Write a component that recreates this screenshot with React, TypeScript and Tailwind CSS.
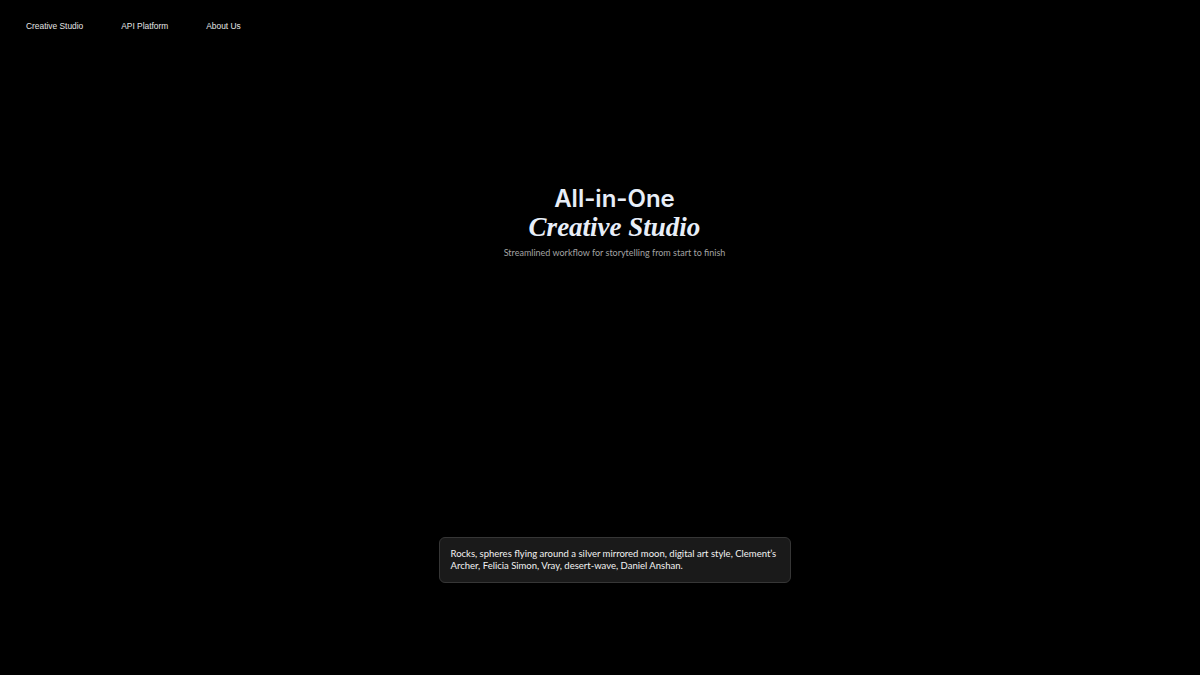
const NAV = ['Creative Studio', 'API Platform', 'About Us']

export default function App() {
  return (
    <div className="flex h-[675px] w-full flex-col bg-black text-white">
      <nav className="flex gap-[38px] px-[26px] pt-[20px] font-['Liberation_Sans',Arial,sans-serif] text-[8.4px] text-[#e5e5e5]">
        {NAV.map((item) => (
          <a key={item} href="#" className="leading-[12px]">
            {item}
          </a>
        ))}
      </nav>

      <main className="flex flex-1 flex-col pl-[29px]">
        <section className="mt-[153px] flex flex-col items-center">
          <h1 className="flex flex-col items-center text-[#e8eef8]">
            <span className="font-['Inter','Noto_Sans',sans-serif] text-[24px] font-semibold leading-[28px]">
              All-in-One
            </span>
            <span className="font-['Liberation_Serif','Times_New_Roman',serif] text-[27px] font-bold italic leading-[29px]">
              Creative Studio
            </span>
          </h1>
          <p className="mt-[4px] font-['Lato',sans-serif] text-[9px] text-[#a3a3a3]">
            Streamlined workflow for storytelling from start to finish
          </p>
        </section>

        <div className="mt-auto mb-[92px] flex justify-center">
          <div className="w-[352px] rounded-[6px] border border-[#363636] bg-[#1a1a1a] px-[11px] py-[10px] font-['Lato',sans-serif] text-[9.5px] leading-[12px] text-[#f2f2f2]">
            Rocks, spheres flying around a silver mirrored moon, digital art style, Clement’s Archer, Felicia Simon, Vray, desert-wave, Daniel Anshan.
          </div>
        </div>
      </main>
    </div>
  )
}
